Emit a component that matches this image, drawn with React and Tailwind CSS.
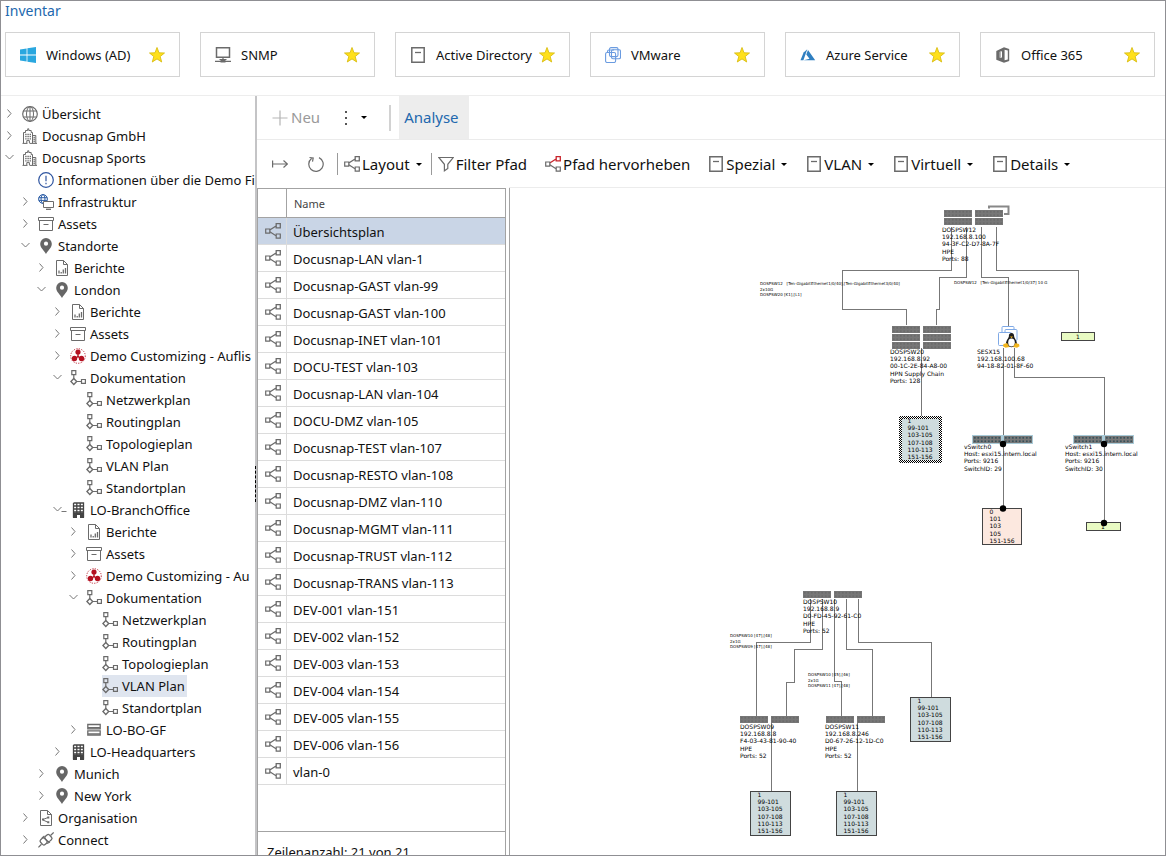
import React, { useState } from 'react';
import clsx from 'clsx';

const Svg = ({ size = 16, className, children }) => (
  <svg
    width={size}
    height={size}
    viewBox="0 0 16 16"
    fill="none"
    stroke="#6b6b6b"
    className={clsx('shrink-0', className)}
    aria-hidden="true"
  >
    {children}
  </svg>
);

const WindowsIcon = () => (
  <Svg>
    <g fill="#2aa7df" stroke="none">
      <path d="M0 2.4 6.6 1.4V7.6H0zM7.4 1.3 16 0V7.6H7.4zM0 8.4H6.6V14.6L0 13.6zM7.4 8.4H16V16L7.4 14.7z" />
    </g>
  </Svg>
);

const MonitorIcon = () => (
  <Svg>
    <path d="M1.5 .8h13v9.4h-13z" strokeWidth="1.5" />
    <path d="M8 10.5v2M0 14.300h16M4.500 12.500h7" strokeWidth="1.2" />
    <path d="M5.5 12.5h5v3h-5z" fill="#6b6b6b" stroke="none" />
  </Svg>
);

const PageIcon = () => (
  <Svg>
    <path d="M1.8 .8h12.4v14.4H1.8z" strokeWidth="1.5" />
    <path d="M5 5.5h6" strokeWidth="1.3" />
  </Svg>
);

const VmwareIcon = () => (
  <Svg>
    <g stroke="#6a9be0" strokeWidth="1.1">
      <rect x="4.500" y=".6" width="8.500" height="9" rx="1.500" />
      <rect x="6.500" y="2.800" width="9" height="9" rx="1.500" />
      <rect x=".6" y="5.500" width="10" height="10" rx="1.500" />
      <path d="M2.500 5.500V4.500Q2.500 3 4 3H9" />
    </g>
  </Svg>
);

const AzureIcon = () => (
  <Svg>
    <g fill="#2f7fc1" stroke="none">
      <path d="M7.3 2.2 3.6 5.6.5 13.2H3.4z" />
      <path d="M8 3 6.3 7.6 9.5 11.7 3.7 13.2H15.2z" />
    </g>
  </Svg>
);

const OfficeIcon = () => (
  <Svg>
    <path
      d="M1.300 4 9 .3l5.200 1.700v12L9 15.700 1.300 12.700zM9.600 2.800v10.400l3.200-.7v-9zM4.800 4.800v6l2.300-.4V4.200z"
      fill="#6b6b6b"
      fillRule="evenodd"
      stroke="none"
    />
    <path d="M8 3v10.200" stroke="#6b6b6b" strokeWidth="2" />
    <path d="M5 5v5.600" stroke="#9b9b9b" strokeWidth="1.500" />
  </Svg>
);

const GlobeIcon = () => (
  <Svg>
    <circle cx="8" cy="8" r="7.3" strokeWidth="1.2" />
    <ellipse cx="8" cy="8" rx="3.5" ry="7.3" />
    <path d="M1.4 5h13.2M1.4 11h13.2M8 .7v14.6" />
  </Svg>
);

const CompanyIcon = () => (
  <Svg>
    <path d="M1.5 15V4.5h2v-2h2.2V.8h1.1v1.7h2.4v2h1.3V15M10.5 7.5h3.3V15M.5 15.4h5M7.5 15.4H15" />
    <path d="M3.2 6.5h1.4M5.4 6.5h1.4M7.6 6.5H9M3.2 8.7h1.4M5.4 8.7h1.4M7.6 8.7H9M3.2 10.9h1.4M5.4 10.9h1.4M7.6 10.9H9M11.5 9.5h1.3M11.5 11.5h1.3M11.5 13.5h1.3" strokeWidth="1.3" />
    <path d="M4.8 15v-2.4h2.6V15" />
  </Svg>
);

const InfoIcon = () => (
  <Svg>
    <circle cx="8" cy="8" r="7.3" stroke="#2f55a0" strokeWidth="1.2" />
    <path d="M8 3.8v5.4M8 10.8v1.4" stroke="#2f55a0" strokeWidth="1.2" />
  </Svg>
);

const InfraIcon = () => (
  <Svg>
    <g stroke="#2c5da6">
      <circle cx="5" cy="5" r="4.4" />
      <ellipse cx="5" cy="5" rx="2" ry="4.4" />
      <path d="M.8 3.7h8.4M.8 6.4h8.4" />
    </g>
    <path d="M5.5 7.5h10v6h-10z" fill="#fff" />
    <path d="M8 15.3h5" strokeWidth="1.3" />
  </Svg>
);

const AssetsIcon = () => (
  <Svg>
    <path d="M.5 1.500h15v3H.5zM1.500 4.500v10h13v-10M5.500 8.500h5" />
  </Svg>
);

const PinIcon = () => (
  <Svg>
    <path
      d="M8 0a5.8 5.8 0 0 0-5.8 5.8C2.2 9.8 5.6 12 8 16c2.400-4 5.800-6.200 5.800-10.200A5.800 5.800 0 0 0 8 0zm0 3.600a2.100 2.100 0 1 1 0 4.200 2.100 2.100 0 0 1 0-4.200z"
      fill="#666"
      fillRule="evenodd"
      stroke="none"
    />
  </Svg>
);

const ReportIcon = () => (
  <Svg>
    <path d="M2.500.5h7l4 4v11h-11zM9.500.5v4h4" />
    <path d="M5 13.500v-3M7.200 13.500V12M9.300 13.500V9.500M11.500 13.500V8" strokeWidth="1.300" />
  </Svg>
);

const CustomIcon = () => (
  <Svg>
    <circle cx="8" cy="8" r="7.300" stroke="#b41020" strokeDasharray="1.200 1.300" strokeWidth=".9" />
    <g fill="#b41020" stroke="none">
      <circle cx="8" cy="4" r="2.600" />
      <circle cx="4.500" cy="10.500" r="2.700" />
      <circle cx="11.500" cy="10.500" r="2.700" />
      <path d="M7.300 4h1.400v4l3 3-1 .8L8 9.200 5.300 11.800l-1-.8 3-3z" />
    </g>
  </Svg>
);

const PlanIcon = () => (
  <Svg>
    <path d="M1.800.6h4v4h-4zM11.500 9.500h3.900v3.900h-3.900zM3.800 4.600v4.100M6.500 11.500h5" strokeWidth="1.200" />
    <path d="M3.800 8.500l2.900 3-2.900 3-2.900-3z" strokeWidth="1.400" />
  </Svg>
);

const OfficeBlockIcon = () => (
  <Svg>
    <path d="M3.500 1h10v14.500M3.500 1v14.500M3.500 4h10M3.500 7h10M3.500 10h10M6.800 1v10M10.200 1v10" stroke="#444" strokeWidth="1.300" />
    <path d="M3 10.500h11V16H10v-3H7v3H3z" fill="#444" stroke="none" />
  </Svg>
);

const FloorIcon = () => (
  <Svg>
    <path d="M1.800 2.500h12.400v4.400H1.800zM1.800 8.800h12.400v4.400H1.800z" strokeWidth="1.300" />
    <path d="M2 5.700h12M2 12h12" strokeWidth="1.600" />
  </Svg>
);

const OrgIcon = () => (
  <Svg>
    <path d="M2.500.5h7l4 4v11h-11zM9.500.5v4h4" />
    <path d="M5 9.500l5-2M5 10l5 2.300" />
    <path d="M4 8.600h2v2H4zM9.300 6.500h2v2h-2zM9.300 11.200h2v2h-2z" fill="#6b6b6b" stroke="none" />
  </Svg>
);

const ConnectIcon = () => (
  <Svg>
    <g strokeWidth="1.300">
      <rect x="2.800" y="6.200" width="5.600" height="6.500" rx="1.800" transform="rotate(-42 5.600 9.400)" />
      <rect x="7.600" y="2.800" width="5.600" height="6.500" rx="1.800" transform="rotate(-42 10.400 6)" />
      <path d="M12.500 3.500 15.700.5M3.500 12.300.4 15.400M9 11.500l3-1.500M4 6l2.500-2" />
    </g>
  </Svg>
);

const ShareIcon = ({ accent = '#6b6b6b', className }) => (
  <Svg className={className}>
    <path d="M4.800 8.800l6.200 4" strokeWidth="1.200" />
    <path d="M4.800 7l6.200-4M11.200.7h4.100v4.100h-4.100z" strokeWidth="1.300" stroke={accent} />
    <path d="M.7 6h4.100v4.100H.7zM11.200 11h4.100v4.100h-4.100z" strokeWidth="1.200" />
  </Svg>
);

const HighlightIcon = () => <ShareIcon accent="#c8242c" />;

const FilterIcon = () => (
  <Svg>
    <path d="M.8 1.500h14.400L9.800 8.300v4.200l-3.400 2.300V8.300z" strokeWidth="1.200" />
  </Svg>
);

const StarIcon = () => (
  <Svg>
    <path d="M8 .5l2 5.300 5.500.2-4.300 3.500 1.500 5.500L8 11.900l-4.700 3.100 1.500-5.500L.5 6l5.500-.2z" fill="#ffe01a" stroke="#d9bd14" strokeWidth=".9" />
  </Svg>
);

const Caret = () => (
  <svg width="6" height="3" viewBox="0 0 6 3" className="shrink-0" aria-hidden="true">
    <path d="M0 0h6L3 3z" fill="#000" />
  </svg>
);

const favourites = [
  { label: 'Windows (AD)', Icon: WindowsIcon },
  { label: 'SNMP', Icon: MonitorIcon },
  { label: 'Active Directory', Icon: PageIcon },
  { label: 'VMware', Icon: VmwareIcon },
  { label: 'Azure Service', Icon: AzureIcon },
  { label: 'Office 365', Icon: OfficeIcon },
];

const plans = (level, active) =>
  ['Netzwerkplan', 'Routingplan', 'Topologieplan', 'VLAN Plan', 'Standortplan'].map(label => ({
    level,
    label,
    Icon: PlanIcon,
    active: label === active,
  }));

const tree = [
  { level: 0, label: 'Übersicht', Icon: GlobeIcon, state: 'closed' },
  { level: 0, label: 'Docusnap GmbH', Icon: CompanyIcon, state: 'closed' },
  { level: 0, label: 'Docusnap Sports', Icon: CompanyIcon, state: 'open' },
  { level: 1, label: 'Informationen über die Demo Fi', Icon: InfoIcon },
  { level: 1, label: 'Infrastruktur', Icon: InfraIcon, state: 'closed' },
  { level: 1, label: 'Assets', Icon: AssetsIcon, state: 'closed' },
  { level: 1, label: 'Standorte', Icon: PinIcon, state: 'open' },
  { level: 2, label: 'Berichte', Icon: ReportIcon, state: 'closed' },
  { level: 2, label: 'London', Icon: PinIcon, state: 'open' },
  { level: 3, label: 'Berichte', Icon: ReportIcon, state: 'closed' },
  { level: 3, label: 'Assets', Icon: AssetsIcon, state: 'closed' },
  { level: 3, label: 'Demo Customizing - Auflis', Icon: CustomIcon, state: 'closed' },
  { level: 3, label: 'Dokumentation', Icon: PlanIcon, state: 'open' },
  ...plans(4),
  { level: 3, label: 'LO-BranchOffice', Icon: OfficeBlockIcon, state: 'open', line: true },
  { level: 4, label: 'Berichte', Icon: ReportIcon, state: 'closed' },
  { level: 4, label: 'Assets', Icon: AssetsIcon, state: 'closed' },
  { level: 4, label: 'Demo Customizing - Au', Icon: CustomIcon, state: 'closed' },
  { level: 4, label: 'Dokumentation', Icon: PlanIcon, state: 'open' },
  ...plans(5, 'VLAN Plan'),
  { level: 4, label: 'LO-BO-GF', Icon: FloorIcon, state: 'closed' },
  { level: 3, label: 'LO-Headquarters', Icon: OfficeBlockIcon, state: 'closed' },
  { level: 2, label: 'Munich', Icon: PinIcon, state: 'closed' },
  { level: 2, label: 'New York', Icon: PinIcon, state: 'closed' },
  { level: 1, label: 'Organisation', Icon: OrgIcon, state: 'closed' },
  { level: 1, label: 'Connect', Icon: ConnectIcon, state: 'closed' },
];

const indents = ['pl-1', 'pl-5', 'pl-9', 'pl-13', 'pl-17', 'pl-21'];

const vlans = [
  'Übersichtsplan',
  'Docusnap-LAN vlan-1',
  'Docusnap-GAST vlan-99',
  'Docusnap-GAST vlan-100',
  'Docusnap-INET vlan-101',
  'DOCU-TEST vlan-103',
  'Docusnap-LAN vlan-104',
  'DOCU-DMZ vlan-105',
  'Docusnap-TEST vlan-107',
  'Docusnap-RESTO vlan-108',
  'Docusnap-DMZ vlan-110',
  'Docusnap-MGMT vlan-111',
  'Docusnap-TRUST vlan-112',
  'Docusnap-TRANS vlan-113',
  'DEV-001 vlan-151',
  'DEV-002 vlan-152',
  'DEV-003 vlan-153',
  'DEV-004 vlan-154',
  'DEV-005 vlan-155',
  'DEV-006 vlan-156',
  'vlan-0',
];

const Favourite = ({ label, Icon }) => (
  <button type="button" className="flex h-[45px] items-center border border-[#d4d4d4] bg-white px-[14px] text-[13px] whitespace-nowrap">
    <Icon />
    <span className="ml-[10px] flex-1 pt-[2px] text-left">{label}</span>
    <StarIcon />
  </button>
);

const TreeRow = ({ node, active, onSelect }) => {
  const { Icon } = node;
  return (
    <li className={clsx('flex h-[22px] items-center', indents[node.level])}>
      {node.state ? (
        <button type="button" className="flex w-[17px] shrink-0 items-center" aria-label={node.state === 'open' ? 'Zuklappen' : 'Aufklappen'}>
          <svg width="17" height="10" viewBox="0 0 17 10" fill="none" stroke="#777" className="shrink-0">
            {node.state === 'open' ? <path d="M0.500 2l4 4 4-4" /> : <path d="M2.500 .5l3.500 4-3.500 4" />}
            {node.line && <path d="M8.500 6.500h5" />}
          </svg>
        </button>
      ) : (
        <span className="w-[17px] shrink-0" />
      )}
      <button
        type="button"
        onClick={onSelect}
        className={clsx('flex h-[22px] items-center gap-1 pr-[2px] text-[13px] whitespace-nowrap', active && 'bg-[#dfe5ef]')}
      >
        <Icon />
        <span className="pt-[2px]">{node.label}</span>
      </button>
    </li>
  );
};

const Tree = () => {
  const [selected, setSelected] = useState(tree.findIndex(n => n.active));

  return (
    <nav className="relative w-64 shrink-0 border-r-2 border-[#c4c4c6]">
      <ul className="h-full overflow-hidden pt-[7px]">
        {tree.map((node, i) => (
          <TreeRow key={i} node={node} active={i === selected} onSelect={() => setSelected(i)} />
        ))}
      </ul>
      <span className="absolute top-[370px] -right-px h-9 border-l border-dashed border-black" />
    </nav>
  );
};

const TabBar = () => (
  <div className="flex h-11 shrink-0 items-center border-b border-[#ebebeb] text-[15px]">
    <button type="button" disabled className="ml-[15px] flex items-center gap-[3px] text-[#9a9a9a]">
      <Svg>
        <path d="M8 .5v15M.5 8h15" stroke="#b5b5b5" strokeWidth="1.200" />
      </Svg>
      Neu
    </button>
    <button type="button" className="ml-6 flex items-center gap-[13px]" aria-label="Weitere Aktionen">
      <svg width="4" height="16" viewBox="0 0 4 16" fill="#555">
        <path d="M1 1h2v2H1zM1 7h2v2H1zM1 13h2v2H1z" />
      </svg>
      <Caret />
    </button>
    <span className="ml-[22px] h-[26px] border-l-2 border-[#d2d2d2]" />
    <button type="button" className="ml-2 h-full w-[70px] bg-[#ededed] pl-[5px] text-left text-[#2268ae]">
      Analyse
    </button>
  </div>
);

const Tool = ({ Icon, label, menu, className }) => (
  <button type="button" className={clsx('flex items-center gap-[2px] whitespace-nowrap', className)}>
    <Icon />
    {label}
    {menu && (
      <span className="ml-1">
        <Caret />
      </span>
    )}
  </button>
);

const Toolbar = () => (
  <div className="flex h-12 shrink-0 items-center text-[15px]">
    <button type="button" className="ml-[15px]" aria-label="Einblenden">
      <Svg>
        <path d="M.6 4.500v7M1 8h14.500M11.500 4.500l4 3.500-4 3.500" strokeWidth="1.200" />
      </Svg>
    </button>
    <button type="button" className="ml-5" aria-label="Aktualisieren">
      <Svg>
        <path d="M11 1.600A7.200 7.200 0 1 1 3.500 2.500M1.500 1.500l3.700.5-.7 3.700" strokeWidth="1.200" />
      </Svg>
    </button>
    <span className="mr-[6px] ml-[13px] h-[22px] border-l border-[#9a9a9a]" />
    <Tool Icon={ShareIcon} label="Layout" menu />
    <span className="mr-[6px] ml-[9px] h-[22px] border-l border-[#9a9a9a]" />
    <Tool Icon={FilterIcon} label="Filter Pfad" />
    <Tool Icon={HighlightIcon} label="Pfad hervorheben" className="ml-[18px]" />
    <Tool Icon={PageIcon} label="Spezial" menu className="ml-[18px]" />
    <Tool Icon={PageIcon} label="VLAN" menu className="ml-[19px]" />
    <Tool Icon={PageIcon} label="Virtuell" menu className="ml-[19px]" />
    <Tool Icon={PageIcon} label="Details" menu className="ml-[19px]" />
  </div>
);

const VlanList = () => {
  const [selected, setSelected] = useState(0);

  return (
    <section className="mr-[3px] flex w-[249px] shrink-0 flex-col border border-b-0 border-[#a3a3a3]">
      <div className="min-h-0 flex-1 overflow-hidden">
        <table className="w-full table-fixed border-separate border-spacing-0 text-left text-[13px]">
          <thead>
            <tr className="h-[29px] text-[11px] text-[#444]">
              <th className="w-[29px] border-r border-b border-[#a3a3a3] p-0" />
              <th className="border-b border-[#a3a3a3] p-0 pt-[2px] pl-[7px] font-normal">Name</th>
            </tr>
          </thead>
          <tbody>
            {vlans.map((name, i) => (
              <tr key={name} onClick={() => setSelected(i)} className={clsx('h-[27px]', i === selected && 'bg-[#c9d5e6]')}>
                <td className="border-r border-b border-[#dcdcdc] p-0 pl-[7px]">
                  <ShareIcon />
                </td>
                <td className="border-b border-[#dcdcdc] p-0 pt-[3px] pl-[6px] whitespace-nowrap">{name}</td>
              </tr>
            ))}
          </tbody>
        </table>
      </div>
      <div className="h-6 overflow-hidden border-t border-[#a3a3a3] pt-[10px] pl-[9px] text-[13px] leading-5">
        Zeilenanzahl: 21 von 21
      </div>
    </section>
  );
};

// y offsets of the text lines below a device
const lineOffsets = [0, 7, 14, 22, 29, 36];

const Lines = ({ x, y, lines, small }) => (
  <text fontSize={small ? 4 : 6} fill="#000" stroke="none" xmlSpace="preserve">
    {lines.map((line, i) => (
      <tspan key={i} x={x} y={y + (small ? [0, 6, 11][i] : lineOffsets[i])}>
        {line}
      </tspan>
    ))}
  </text>
);

const Ports = ({ x, y, rows = 1, virtual }) => (
  <g stroke="none">
    {virtual && <rect x={x - 1} y={y - 1} width="61" height="9" fill="#a9cbd8" />}
    {Array.from({ length: rows }).map((_, row) =>
      [0, 31].map(dx => (
        <g key={`${row}-${dx}`} transform={`translate(${x + dx} ${y + row * 8})`}>
          <rect width="28" height="7" fill={virtual ? '#8fb6c4' : '#c9c9c9'} />
          <rect width="28" height="7" fill={virtual ? 'url(#vports)' : 'url(#ports)'} />
        </g>
      ))
    )}
  </g>
);

const vlanLines = ['1', '99-101', '103-105', '107-108', '110-113', '151-156'];

const VlanBox = ({ x, y, w = 40, h = 45, fill = '#cfdcde', lines = vlanLines, selected }) => (
  <g>
    <rect x={x} y={y} width={w} height={h} fill={fill} stroke="#444" />
    {selected && <rect x={x} y={y} width={w} height={h} fill="none" stroke="url(#check)" strokeWidth="3" />}
    <Lines x={x + 7} y={y + 5} lines={lines} />
  </g>
);

const Plan = () => (
  <svg width="655" height="667" viewBox="510 188 655 667" fill="none" stroke="#777" className="max-w-none font-['DejaVu_Sans',sans-serif]">
    <defs>
      <pattern id="ports" width="3.500" height="3.500" patternUnits="userSpaceOnUse">
        <rect x=".5" y=".5" width="2.500" height="2.500" fill="#666" />
      </pattern>
      <pattern id="vports" width="3.500" height="3.500" patternUnits="userSpaceOnUse">
        <rect x=".5" y=".5" width="2.600" height="2.600" fill="#2c4a55" />
      </pattern>
      <pattern id="check" width="2" height="2" patternUnits="userSpaceOnUse">
        <rect width="2" height="2" fill="#fff" stroke="none" />
        <path d="M0 0h1v1H0zM1 1h1v1H1z" fill="#000" stroke="none" />
      </pattern>
    </defs>

    <path
      d="M951.500 227V270.500H842.500V309.500H906.500V325M966.500 227V277.500H939.500V309.500H936.500V325M981.500 227V277.500H1008.500V326M996.500 227V270.500H1078.500V332M921.500 348V416M1003.500 348V508M1014.500 348V377.500H1104.500V522"
      shapeRendering="crispEdges"
    />
    <path
      d="M810.500 599V642.500H756.500V716M822.500 599V649.500H794.500V682.500H786.500V716M834.500 599V681.500H841.500V716M846.500 599V649.500H872.500V716M858.500 599V642.500H931.500V697M771.500 723V791M857.500 723V791"
      shapeRendering="crispEdges"
    />
    <path d="M989 208.500V206.500H1008.500V214H1004" stroke="#888" strokeWidth="2" />

    <Ports x={944} y={210} rows={2} />
    <Lines x={942} y={232} lines={['DOSPSW12', '192.168.8.100', '94-3F-C2-D7-8A-7F', 'HPE', 'Ports: 88']} />
    <Ports x={892} y={326} rows={3} />
    <Lines x={890} y={354} lines={['DOSPSW20', '192.168.8.92', '00-1C-2E-84-A8-00', 'HPN Supply Chain', 'Ports: 128']} />
    <Lines small x={760} y={285} lines={['DOSPSW12   [Ten-GigabitEthernet1/0/40],[Ten-GigabitEthernet3/0/40]', '2x10G', 'DOSPSW20 [K1],[L1]']} />
    <Lines small x={954} y={284} lines={['DOSPSW12   [Ten-GigabitEthernet1/0/37] 10 G']} />

    <g stroke="#7fa9e6">
      <rect x="1002" y="326.500" width="12" height="11" rx="1" fill="#fff" />
      <rect x="1005" y="329.500" width="12" height="11" rx="1" fill="#fff" />
      <rect x="998.500" y="332.500" width="13" height="13" rx="1" fill="#fff" />
    </g>
    <g stroke="none">
      <path d="M1011.500 333c-2 0-2.800 1.600-2.600 3.300.1 1.500-3 4.200-2.900 7.500 0 2.700 3 3.400 5.500 3.400s5.500-.7 5.500-3.400c0-3.300-2.900-5.500-2.900-7.500s-.6-3.300-2.600-3.300z" fill="#1d1d1d" />
      <ellipse cx="1011.500" cy="342.500" rx="3.300" ry="4" fill="#fff" />
      <path d="M1010 336.500h3l-1.500 1.700zM1003.500 344l3.500-1 2.500 4-4 .8-2.500-1.500zM1019 344l-3.500-1-2.500 4 4 .8 2.500-1.500z" fill="#f2b51d" />
    </g>
    <Lines x={977} y={354} lines={['SESX15', '192.168.100.68', '94-18-82-01-8F-60']} />

    <VlanBox x={900.500} y={417.500} w={40} h={44} selected />

    <Ports x={973} y={436} virtual />
    <Lines x={964} y={449} lines={['vSwitch0', 'Host: esxi15.intern.local', 'Ports: 9216', 'SwitchID: 29']} />
    <Ports x={1074} y={436} virtual />
    <Lines x={1065} y={449} lines={['vSwitch1', 'Host: esxi15.intern.local', 'Ports: 9216', 'SwitchID: 30']} />

    <VlanBox x={982.500} y={508.500} w={39} h={36} fill="#fce8df" lines={['0', '101', '103', '105', '151-156']} />

    <rect x="1061.500" y="332.500" width="33" height="8" fill="#e9fbc3" stroke="#444" />
    <Lines x={1076} y={339} lines={['1']} />
    <rect x="1086.500" y="522.500" width="34" height="8" fill="#e9fbc3" stroke="#444" />
    <Lines x={1101} y={529} lines={['1']} />

    <g fill="#000" stroke="none">
      <circle cx="1003" cy="444" r="3.200" />
      <circle cx="1104" cy="444" r="3.200" />
      <circle cx="1003" cy="508.500" r="3.200" />
      <circle cx="1104" cy="523" r="3.200" />
    </g>

    <Ports x={803} y={591} />
    <Lines x={803} y={604} lines={['DOSPSW10', '192.168.8.9', 'D0-FD-45-92-61-C0', 'HPE', 'Ports: 52']} />
    <Lines small x={730} y={637} lines={['DOSPSW10 [47],[48]', '2x1G', 'DOSPSW09 [47],[48]']} />
    <Lines small x={808} y={676} lines={['DOSPSW10 [45],[46]', '2x1G', 'DOSPSW11 [47],[48]']} />
    <Ports x={740} y={716} />
    <Lines x={740} y={729} lines={['DOSPSW09', '192.168.8.8', 'F4-03-43-81-90-40', 'HPE', 'Ports: 52']} />
    <Ports x={826} y={716} />
    <Lines x={825} y={729} lines={['DOSPSW11', '192.168.8.246', 'D0-67-26-12-1D-C0', 'HPE', 'Ports: 52']} />

    <VlanBox x={910.500} y={697.500} h={44} />
    <VlanBox x={750.500} y={791.500} h={44} />
    <VlanBox x={836.500} y={791.500} h={44} />
  </svg>
);

const App = () => (
  <div className="flex h-screen flex-col overflow-hidden border border-[#8f8f93] bg-white font-['Noto_Sans','Open_Sans',sans-serif] text-[#111]">
    <header className="border-b border-[#ededed] pr-[10px] pb-[18px] pl-1">
      <h1 className="pb-[11px] text-sm leading-5 text-[#2268ae]">Inventar</h1>
      <div className="grid grid-cols-6 gap-5">
        {favourites.map(f => (
          <Favourite key={f.label} {...f} />
        ))}
      </div>
    </header>
    <div className="flex min-h-0 flex-1">
      <Tree />
      <main className="flex min-w-0 flex-1 flex-col">
        <TabBar />
        <Toolbar />
        <div className="flex min-h-0 flex-1">
          <VlanList />
          <div className="min-w-0 flex-1 overflow-hidden border-l border-[#a3a3a3] shadow-[0_-1px_0_#ececec]">
            <Plan />
          </div>
        </div>
      </main>
    </div>
  </div>
);

export default App;
